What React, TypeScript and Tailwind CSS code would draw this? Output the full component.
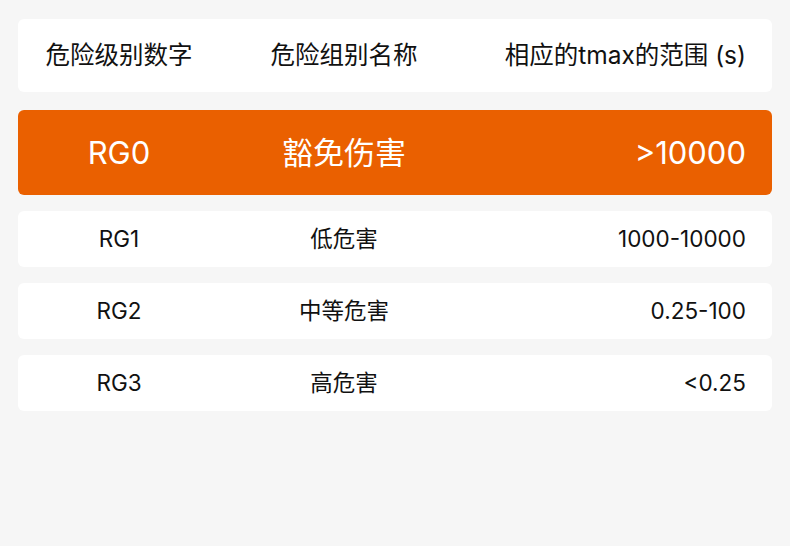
import React from "react";

const rows = [
  { a: "RG1", b: "低危害", c: "1000-10000" },
  { a: "RG2", b: "中等危害", c: "0.25-100" },
  { a: "RG3", b: "高危害", c: "<0.25" },
];

const font = { fontFamily: 'Inter, "Noto Sans CJK SC", sans-serif' };

export default function App() {
  return (
    <div
      className="w-[790px] h-[546px] bg-[#f6f6f6] px-[18px] pt-[19px] text-[#111111]"
      style={font}
    >
      <div className="flex flex-col">
        <div className="h-[73px] bg-white rounded-[6px] grid grid-cols-[202px_248px_1fr] items-center text-[24.5px] leading-none font-normal">
          <div className="text-center">危险级别数字</div>
          <div className="text-center">危险组别名称</div>
          <div className="text-right pr-[26px]">相应的tmax的范围 (s)</div>
        </div>
        <div className="mt-[18px] h-[85px] bg-[#ea6000] rounded-[6px] grid grid-cols-[202px_248px_1fr] items-center text-[31px] leading-none font-normal text-white">
          <div className="text-center">RG0</div>
          <div className="text-center">豁免伤害</div>
          <div className="text-right pr-[26px]">&gt;10000</div>
        </div>
        <div className="mt-[16px] flex flex-col gap-[16px]">
          {rows.map((r) => (
            <div
              key={r.a}
              className="h-[56px] bg-white rounded-[6px] grid grid-cols-[202px_248px_1fr] items-center text-[22.5px] leading-none"
            >
              <div className="text-center">{r.a}</div>
              <div className="text-center">{r.b}</div>
              <div className="text-right pr-[26px]">{r.c}</div>
            </div>
          ))}
        </div>
      </div>
    </div>
  );
}
